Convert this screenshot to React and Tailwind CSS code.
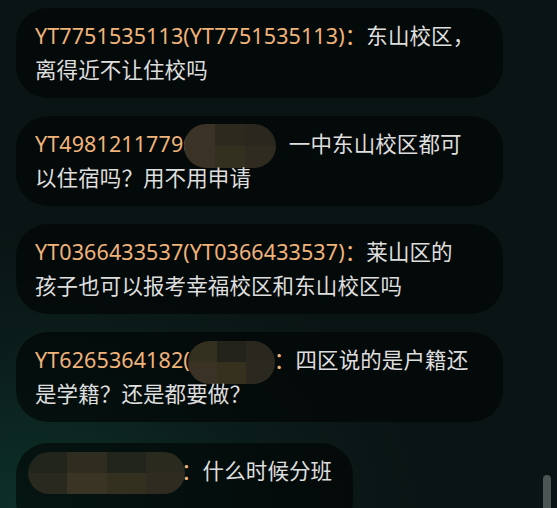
import React from 'react';

const font = { fontFamily: '"Noto Sans", "Noto Sans CJK SC", sans-serif' };

// pixelated blur patch used to hide nicknames
const Mosaic = ({ className = '', cells }) => (
  <span className={`inline-grid grid-rows-2 overflow-hidden rounded-full align-middle ${className}`}>
    {cells.map((c, i) => (
      <span key={i} style={{ backgroundColor: c }} />
    ))}
  </span>
);

const Bubble = ({ children, className = '' }) => (
  <div className={`rounded-[32px] bg-black/55 pr-4 py-[11px] text-[21.5px] leading-[34px] tracking-[0.1px] text-[#dedede] ${className}`}>
    {children}
  </div>
);

const Name = ({ children }) => <span className="text-[#f0b37a]">{children}</span>;

export default function App() {
  return (
    <div
      style={font}
      className="relative h-[508px] w-[557px] overflow-hidden bg-[radial-gradient(ellipse_70%_55%_at_5%_100%,#0d3029_0%,#0b1f1c_50%,#0a1414_100%)]"
    >
      <div className="flex flex-col gap-[18px] pl-4 pt-2">
        <Bubble className="w-[487px] pl-[19px]">
          <div><Name>YT7751535113(YT7751535113)：</Name>东山校区，</div>
          <div>离得近不让住校吗</div>
        </Bubble>

        <Bubble className="w-[487px] pl-[19px]">
          <div className="whitespace-nowrap">
            <Name>YT4981211779(</Name>
            <Mosaic
              className="-my-[12px] -ml-[6px] h-[44px] w-[92px] grid-cols-3"
              cells={['#3b3326', '#2c291f', '#2a271e', '#3a3224', '#34301f', '#2f2b21']}
            />
            <span className="ml-[13px]">一中东山校区都可</span>
          </div>
          <div>以住宿吗？用不用申请</div>
        </Bubble>

        <Bubble className="w-[487px] pl-[19px]">
          <div><Name>YT0366433537(YT0366433537)：</Name>莱山区的</div>
          <div>孩子也可以报考幸福校区和东山校区吗</div>
        </Bubble>

        <Bubble className="w-[487px] pl-[19px]">
          <div className="whitespace-nowrap">
            <Name>YT6265364182(</Name>
            <Mosaic
              className="-my-[12px] -ml-[2px] -mr-[1px] h-[43px] w-[87px] grid-cols-3"
              cells={['#34301f', '#23231b', '#2a271e', '#3a3224', '#36301f', '#2b291f']}
            />
            <Name>：</Name>四区说的是户籍还
          </div>
          <div>是学籍？还是都要做？</div>
        </Bubble>

        <Bubble className="mt-[3px] w-[337px] pl-3">
          <div className="whitespace-nowrap">
            <Mosaic
              className="-my-[12px] -mr-[4px] h-[42px] w-[157px] grid-cols-4"
              cells={['#22251c', '#2f2c20', '#22251c', '#2a2a1f', '#2a291f', '#3a3424', '#34301f', '#2f2b21']}
            />
            <Name>：</Name>什么时候分班
          </div>
          <div>&nbsp;</div>
        </Bubble>
      </div>

      <div className="absolute right-[6px] top-[475px] h-[40px] w-[8px] rounded-full bg-[#4b5553]" />
    </div>
  );
}
